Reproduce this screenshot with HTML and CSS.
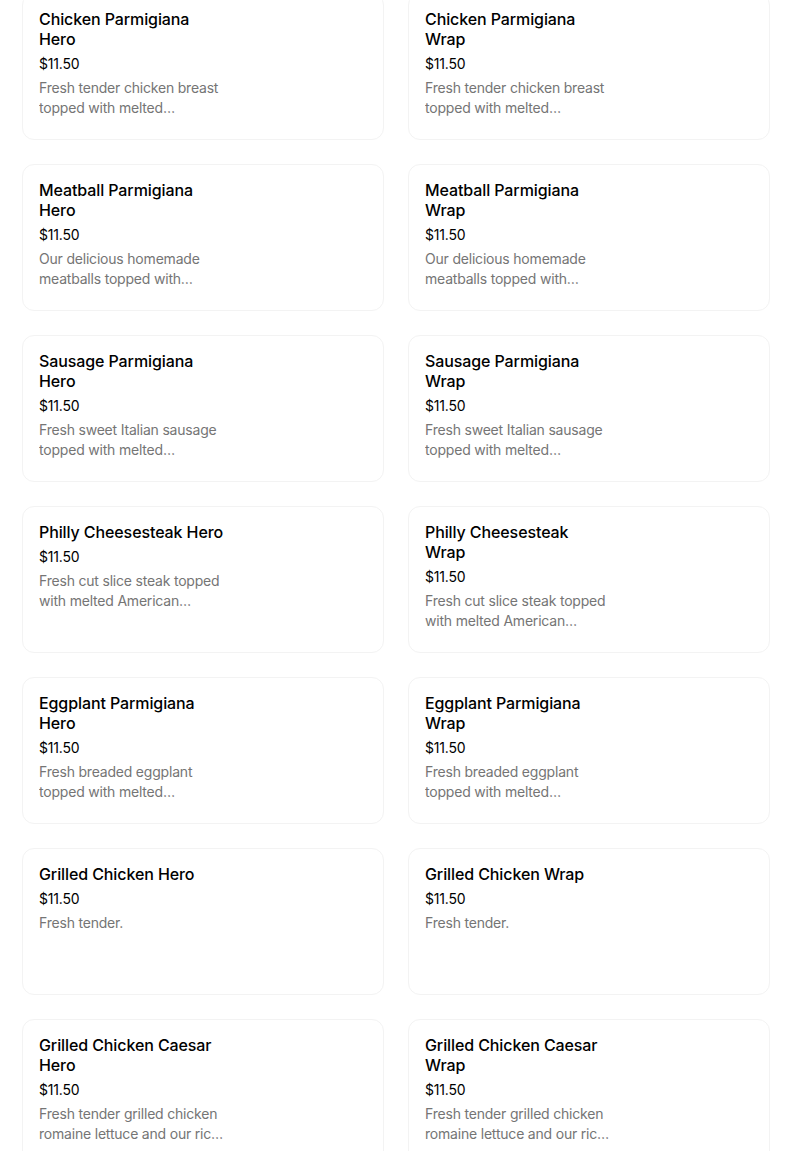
FILE: index.html
```html
<!DOCTYPE html>
<html lang="en">
<head>
<meta charset="utf-8">
<title>Menu</title>
<link rel="stylesheet" href="styles.css">
</head>
<body>
<div class="grid">
  <div class="card"><div class="info"><div class="title">Chicken Parmigiana Hero</div><div class="price">$11.50</div><div class="desc">Fresh tender chicken breast topped with melted mozzarella cheese and our homemade sauce</div></div></div>
  <div class="card"><div class="info"><div class="title">Chicken Parmigiana Wrap</div><div class="price">$11.50</div><div class="desc">Fresh tender chicken breast topped with melted mozzarella cheese and our homemade sauce</div></div></div>
  <div class="card"><div class="info"><div class="title">Meatball Parmigiana Hero</div><div class="price">$11.50</div><div class="desc">Our delicious homemade meatballs topped with mozzarella cheese</div></div></div>
  <div class="card"><div class="info"><div class="title">Meatball Parmigiana Wrap</div><div class="price">$11.50</div><div class="desc">Our delicious homemade meatballs topped with mozzarella cheese</div></div></div>
  <div class="card"><div class="info"><div class="title">Sausage Parmigiana Hero</div><div class="price">$11.50</div><div class="desc">Fresh sweet Italian sausage topped with melted mozzarella cheese</div></div></div>
  <div class="card"><div class="info"><div class="title">Sausage Parmigiana Wrap</div><div class="price">$11.50</div><div class="desc">Fresh sweet Italian sausage topped with melted mozzarella cheese</div></div></div>
  <div class="card"><div class="info"><div class="title">Philly Cheesesteak Hero</div><div class="price">$11.50</div><div class="desc">Fresh cut slice steak topped with melted American cheese, onions and peppers</div></div></div>
  <div class="card"><div class="info"><div class="title">Philly Cheesesteak Wrap</div><div class="price">$11.50</div><div class="desc">Fresh cut slice steak topped with melted American cheese, onions and peppers</div></div></div>
  <div class="card"><div class="info"><div class="title">Eggplant Parmigiana Hero</div><div class="price">$11.50</div><div class="desc">Fresh breaded eggplant topped with melted mozzarella cheese</div></div></div>
  <div class="card"><div class="info"><div class="title">Eggplant Parmigiana Wrap</div><div class="price">$11.50</div><div class="desc">Fresh breaded eggplant topped with melted mozzarella cheese</div></div></div>
  <div class="card"><div class="info"><div class="title">Grilled Chicken Hero</div><div class="price">$11.50</div><div class="desc">Fresh tender.</div></div></div>
  <div class="card"><div class="info"><div class="title">Grilled Chicken Wrap</div><div class="price">$11.50</div><div class="desc">Fresh tender.</div></div></div>
  <div class="card"><div class="info"><div class="title">Grilled Chicken Caesar Hero</div><div class="price">$11.50</div><div class="desc">Fresh tender grilled chicken romaine lettuce and our rich Caesar dressing</div></div></div>
  <div class="card"><div class="info"><div class="title">Grilled Chicken Caesar Wrap</div><div class="price">$11.50</div><div class="desc">Fresh tender grilled chicken romaine lettuce and our rich Caesar dressing</div></div></div>
</div>
</body>
</html>
```
FILE: styles.css
```css
* { box-sizing: border-box; }
html, body { margin: 0; padding: 0; background: #fff; }
body {
  font-family: Inter, "Noto Sans", "Liberation Sans", sans-serif;
  color: #000;
}
.grid {
  display: grid;
  grid-template-columns: 362px 362px;
  column-gap: 24px;
  row-gap: 24px;
  padding-left: 22px;
  margin-top: -7px;
}
.card {
  height: 147px;
  border: 1px solid #f3f3f3;
  border-radius: 12px;
  padding: 15px 16px 16px;
  background: #fff;
}
.info {
  width: 186px;
  display: flex;
  flex-direction: column;
}
.title {
  font-size: 16px;
  font-weight: 500;
  line-height: 20px;
  letter-spacing: -0.1px;
}
.price {
  margin-top: 5px;
  font-size: 14px;
  line-height: 20px;
  font-weight: 400;
  color: #000;
  letter-spacing: -0.2px;
}
.desc {
  margin-top: 4px;
  font-size: 14px;
  line-height: 20px;
  color: #757575;
  display: -webkit-box;
  -webkit-line-clamp: 2;
  -webkit-box-orient: vertical;
  overflow: hidden;
  letter-spacing: -0.2px;
}
```
